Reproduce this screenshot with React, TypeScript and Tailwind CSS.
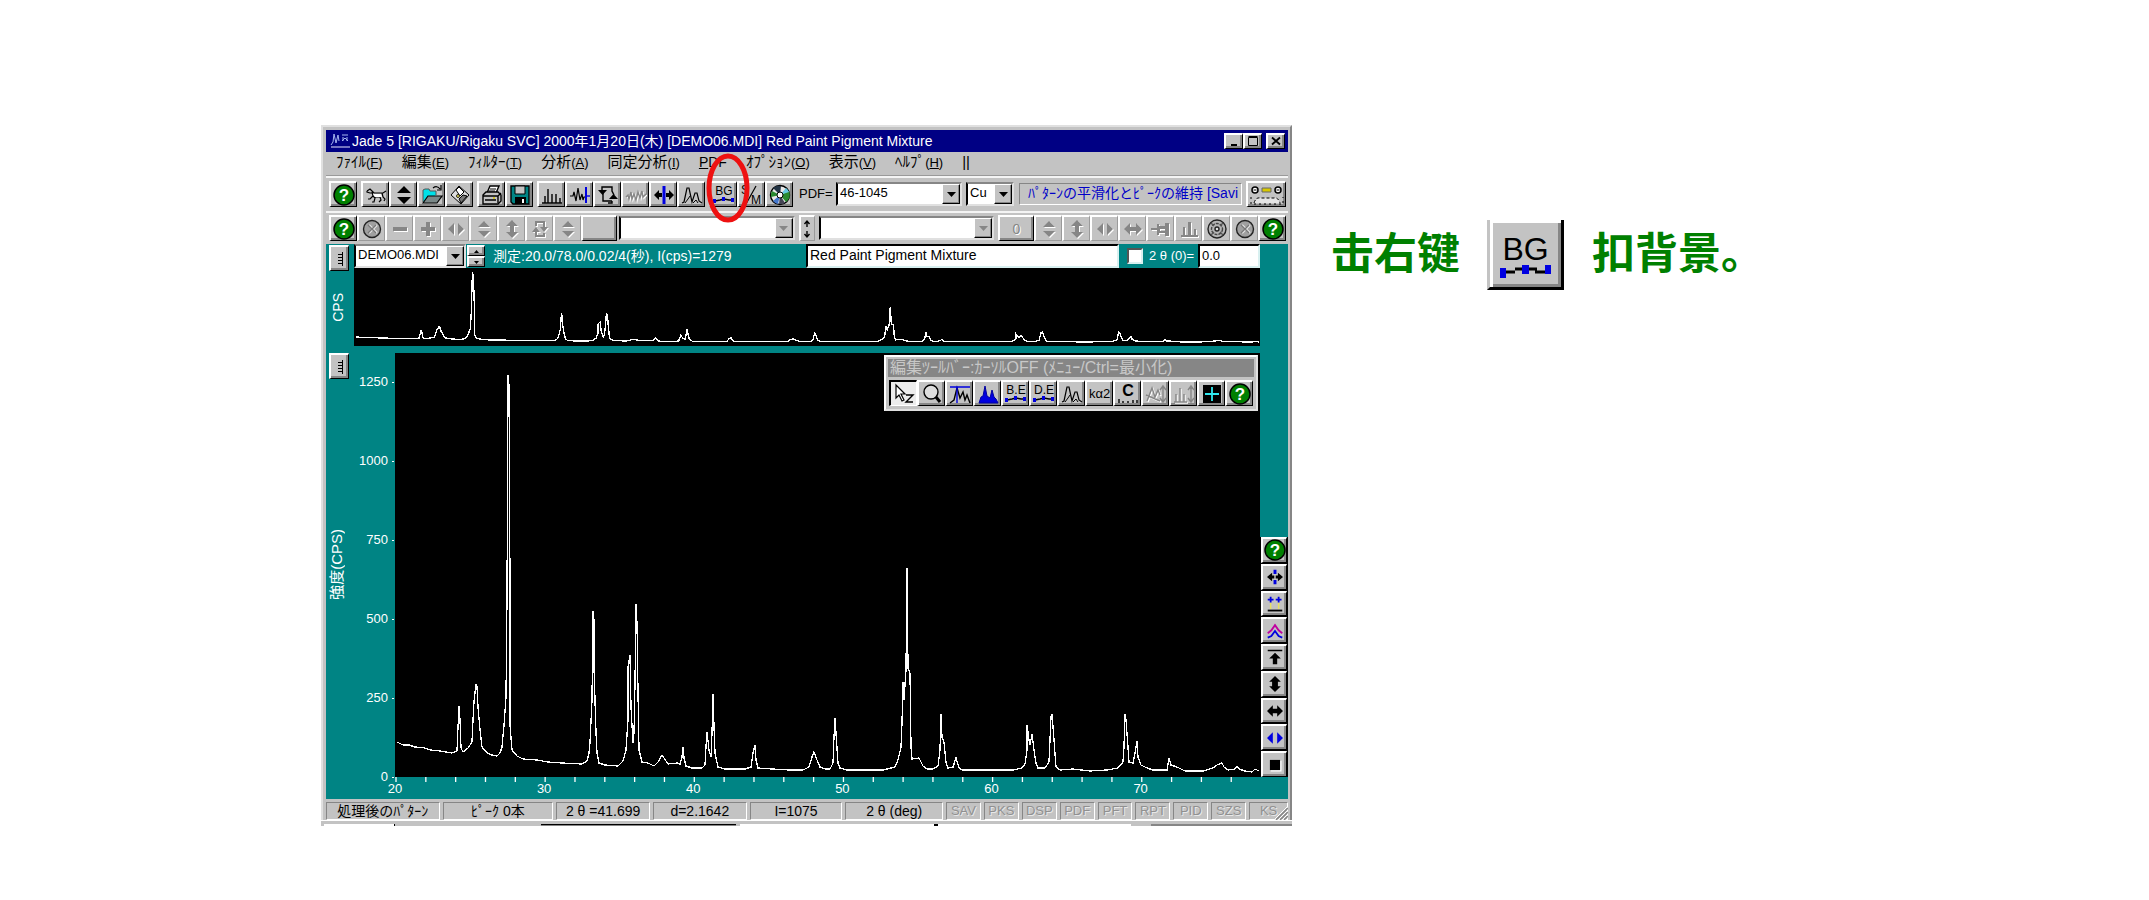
import type { ReactNode } from 'react'
import clsx from 'clsx'

// Diffraction trace in plot units (865 x 424, origin top left)
const TRACE: [number, number][] = [
  [2, 389], [8, 392], [14, 392], [20, 394], [30, 395], [35, 397], [45, 398], [57, 400], [62, 398], [63, 374], [64, 353], [65, 367], [66, 395],
  [68, 399], [73, 395], [77, 389], [78, 367], [79, 349], [81, 331], [82, 334], [83, 354], [85, 377], [87, 394], [92, 400], [97, 402],
  [102, 403], [105, 400], [107, 394], [109, 372], [111, 344], [112, 244], [113, 22], [114, 32], [115, 232], [115, 372], [117, 397],
  [122, 403], [128, 406], [142, 407], [153, 409], [167, 410], [187, 411], [192, 408], [194, 400], [195, 389], [197, 347], [198, 258],
  [199, 267], [199, 314], [201, 380], [202, 400], [204, 410], [210, 412], [223, 413], [228, 408], [231, 397], [233, 367], [233, 314],
  [235, 302], [236, 354], [238, 390], [239, 380], [240, 330], [241, 251], [242, 270], [243, 339], [244, 397], [247, 409], [253, 410],
  [259, 413], [263, 409], [267, 402], [271, 408], [273, 411], [282, 410], [285, 411], [287, 404], [288, 394], [289, 405], [291, 413],
  [297, 415], [307, 415], [310, 412], [311, 394], [312, 379], [314, 397], [316, 404], [317, 380], [318, 341], [319, 374], [320, 400],
  [323, 414], [330, 416], [350, 416], [356, 414], [358, 400], [360, 392], [361, 407], [363, 415], [377, 416], [395, 417], [408, 417],
  [414, 414], [417, 404], [419, 399], [422, 407], [425, 414], [430, 416], [435, 416], [438, 410], [439, 384], [440, 365], [441, 380],
  [443, 410], [445, 415], [452, 417], [488, 417], [500, 414], [503, 407], [506, 394], [507, 370], [508, 329], [509, 347], [511, 317],
  [512, 215], [513, 315], [515, 320], [516, 394], [517, 406], [524, 405], [528, 413], [532, 416], [538, 416], [543, 413], [545, 397],
  [546, 361], [547, 384], [549, 389], [551, 410], [553, 415], [558, 414], [561, 405], [564, 415], [567, 417], [618, 417], [627, 415],
  [630, 411], [632, 397], [632, 372], [634, 387], [635, 392], [637, 381], [639, 397], [641, 410], [643, 415], [650, 415], [654, 409],
  [655, 387], [656, 364], [657, 361], [659, 387], [661, 414], [665, 417], [678, 416], [695, 418], [712, 417], [723, 415], [728, 409],
  [729, 394], [730, 361], [731, 367], [733, 394], [734, 409], [738, 410], [740, 400], [742, 388], [743, 404], [746, 412], [752, 415],
  [758, 417], [772, 417], [774, 405], [776, 412], [782, 414], [790, 418], [808, 418], [818, 415], [822, 412], [827, 410], [829, 414],
  [833, 417], [840, 416], [842, 413], [844, 416], [850, 418], [857, 419], [860, 416], [864, 418],
]

const mainPoints = TRACE.map(([x, y]) => `${x},${y}`).join(' ')
const overviewPoints = TRACE.map(([x, y]) => `${x},${75 - (424 - y) * 0.173}`).join(' ')

const MENUS = [
  ['ﾌｧｲﾙ', 'F'],
  ['編集', 'E'],
  ['ﾌｨﾙﾀｰ', 'T'],
  ['分析', 'A'],
  ['同定分析', 'I'],
  ['PDF', ''],
  ['ｵﾌﾟｼｮﾝ', 'O'],
  ['表示', 'V'],
  ['ﾍﾙﾌﾟ', 'H'],
]

const FLAGS = ['SAV', 'PKS', 'DSP', 'PDF', 'PFT', 'RPT', 'PID', 'SZS']

function Icon({ children, className = 'w-[22px] h-[22px]' }: { children: ReactNode; className?: string }) {
  return (
    <svg viewBox="0 0 22 22" className={clsx('shrink-0', className)} fill="none" stroke="#000" strokeWidth="1.4" aria-hidden="true">
      {children}
    </svg>
  )
}

// Grey glyph with the white lower-right echo of a disabled button
function Etched({ d }: { d: string }) {
  return (
    <Icon>
      <g stroke="none">
        <path d={d} fill="#fff" transform="translate(1 1)" />
        <path d={d} fill="#868686" />
      </g>
    </Icon>
  )
}

const HelpIcon = () => (
  <Icon>
    <circle cx="11" cy="11" r="10" fill="#008000" strokeWidth="1.5" />
    <text x="11" y="17" textAnchor="middle" fill="#fff" stroke="none" className="font-bold text-[17px]">?</text>
  </Icon>
)

const BaselineIcon = ({ label }: { label: string }) => (
  <Icon>
    <text x="11" y="11" textAnchor="middle" fill="#000" stroke="none" className="text-[12px]">{label}</text>
    <path d="M2 17 l5 -1 l4 -1 l5 1 l4 0" />
    <path d="M0 15h3v4h-3z M9 13h3v4h-3z M18 14h3v4h-3z" fill="#0000e0" stroke="none" />
  </Icon>
)

const PeaksIcon = () => (
  <Icon>
    <path d="M1 19 L3 18 L6 4 L8 4 L11 18 L14 9 L16 9 L18 17 L21 19" strokeWidth="1.200" />
    <path d="M4 19 L7 15 L9 12 M12 19 L15 16 L17 19" strokeWidth="1" />
  </Icon>
)

const CrossIcon = () => (
  <Icon>
    <circle cx="11" cy="11" r="8.5" fill="#a0a0a0" stroke="#222" />
    <path d="M8 7 l8 8 M16 7 l-8 8" stroke="#e8e8e8" strokeWidth="2" />
    <path d="M7 7 l8 8 M15 7 l-8 8" stroke="#777" strokeWidth="1.400" />
  </Icon>
)

const SPLIT_H = 'M9 5 v12 l-6 -6z M13 5 v12 l6 -6z'
const SPLIT_V = 'M5 9 h12 l-6 -6z M5 13 h12 l-6 6z'
const ARROW_H = 'M2 11 l6 -6 v4 h6 v-4 l6 6 l-6 6 v-4 h-6 v4z'
const ARROW_V = 'M11 2 l6 6 h-4 v6 h4 l-6 6 l-6 -6 h4 v-6 h-4z'
const CYCLE = 'M6 3h10v6h3l-4 5l-4 -5h3v-4h-6v3h-2z M16 19h-10v-5h-3l4 -5l4 5h-3v3h6v-2h2z'

function ToolButton({ label, children, flat, wide = 'w-7', tall = 'h-[26px]', className }: { label: string; children?: ReactNode; flat?: boolean; wide?: string; tall?: string; className?: string }) {
  return (
    <button
      type="button"
      aria-label={label}
      disabled={flat}
      className={clsx(
        'shrink-0 flex items-center justify-center overflow-hidden bg-[#c3c3c3] text-black border-t-2 border-l-2 border-t-white border-l-white border-r border-b',
        flat ? 'border-r-[#9a9a9a] border-b-[#9a9a9a]' : 'border-r-black border-b-black shadow-[inset_-2px_-2px_0_#868686]',
        wide,
        tall,
        className,
      )}
    >
      {children}
    </button>
  )
}

function Combo({ label, value, disabled, className }: { label: string; value: string; disabled?: boolean; className: string }) {
  return (
    <div className={clsx('relative shrink-0 h-6 bg-white border-2 border-t-[#868686] border-l-black border-r-[#e0e0e0] border-b-[#e0e0e0]', className)}>
      <select aria-label={label} disabled={disabled} className="block appearance-none w-full h-[18px] pl-0.5 py-0 text-[13px] leading-[18px] bg-white text-black opacity-100 outline-none">
        <option>{value}</option>
      </select>
      <span className="absolute right-0 top-0 bottom-0 w-[18px] flex items-center justify-center pointer-events-none bg-[#c3c3c3] border border-t-white border-l-white border-r-black border-b-black shadow-[inset_-1px_-1px_0_#868686]">
        <svg viewBox="0 0 9 5" className="w-[9px] h-[5px]" aria-hidden="true">
          <path d="M0 0h9l-4.500 5z" fill={disabled ? '#868686' : '#000'} />
        </svg>
      </span>
    </div>
  )
}

function AxisButton({ label }: { label: string }) {
  return (
    <ToolButton label={label} wide="w-5">
      <svg viewBox="0 0 10 16" className="w-[10px] h-4" stroke="#000" aria-hidden="true">
        <path d="M7.500 1v14 M3 3.500h4 M3 6.500h4 M3 9.500h4 M3 12.500h4" fill="none" />
      </svg>
    </ToolButton>
  )
}

function MainToolbar() {
  return (
    <div className="flex items-center h-[35px] pl-[3px] pr-0.5 pb-px border-t-2 border-t-[#f4f4f4]">
      <ToolButton label="Help"><HelpIcon /></ToolButton>
      <div className="flex ml-1">
        <ToolButton label="Pattern">
          <Icon>
            <path d="M2 7 L5 5 L7 7 L9 9 H16 L18 9 L21 7 M2 7 v1 l3 1 l2 0 M7 8 L8 12 L5 15 H3 M8 12 L10 14 L9 18 H7 M10 13 H15 M17 9 L18 13 L20 15 L19 17 M15 13 L16 16 L14 18" strokeWidth="1.200" />
            <path d="M8 10 h8 l1 3 h-7z" fill="#fff" stroke="none" />
          </Icon>
        </ToolButton>
        <ToolButton label="Browse"><Icon><path d="M4 9 h14 l-7 -7z M4 13 h14 l-7 7z" fill="#000" stroke="none" /></Icon></ToolButton>
        <ToolButton label="Open">
          <Icon>
            <path d="M2 18 V6 l2 -1 h4 l1 2 h6 v4" fill="#00e0e8" stroke="#555" strokeWidth="1" />
            <path d="M2 19 l5 -7 h14 l-5 7z" fill="#7a8888" strokeWidth="1.200" />
            <path d="M12 4 q4 -3 7 1 M20 1 v5 h-4" strokeWidth="1.200" />
          </Icon>
        </ToolButton>
        <ToolButton label="Recent">
          <Icon>
            <path d="M2 11 L10 2 L20 11 L12 20z" fill="#ddd" strokeWidth="1" />
            <path d="M7 6 l3 -3 l5 5 l-4 4z" fill="#fff" strokeWidth="1" />
            <path d="M10 15 l4 -4 l4 1 l-6 7z" fill="#777" strokeWidth="1" />
            <circle cx="9" cy="12" r="1.500" fill="#e8e060" strokeWidth=".800" />
          </Icon>
        </ToolButton>
      </div>
      <div className="flex ml-1">
        <ToolButton label="Print">
          <Icon>
            <path d="M6 9 l3 -7 h9 l-3 7z" fill="#fff" />
            <path d="M9 5h6 M8 7h6" strokeWidth="1" />
            <path d="M2 11 l3 -3 h12 l3 3 v6 l-3 3 h-15z" fill="#c3c3c3" />
            <path d="M2 12h15v7 M17 12 l3 -3 M4 16 h11" />
            <path d="M12 14h2" stroke="#d8c800" />
          </Icon>
        </ToolButton>
        <ToolButton label="Save">
          <Icon>
            <path d="M2 2h18v18h-16l-2 -2z" fill="#008484" />
            <path d="M6 2h10v8h-10z" fill="#c3c3c3" strokeWidth="1" />
            <path d="M6 13h11v7h-11z" fill="#000" stroke="none" />
            <path d="M13 15h2v4h-2z" fill="#fff" stroke="none" />
          </Icon>
        </ToolButton>
      </div>
      <div className="flex ml-1">
        <ToolButton label="Lines"><Icon><path d="M1 19h20 M4 19v-7 M7 19v-14 M11 19v-9 M15 19v-9 M19 19v-5" /></Icon></ToolButton>
        <ToolButton label="Smooth">
          <Icon>
            <path d="M1 12 h3 l1 -4 l2 9 l2 -13 l2 12 l2 -6 l1 6 l1 -3 h2" strokeWidth="1.200" />
            <path d="M17 3v16" stroke="#0000e0" strokeWidth="2" />
            <path d="M16 12h5" stroke="#0000e0" />
          </Icon>
        </ToolButton>
        <ToolButton label="Reload">
          <Icon>
            <path d="M5 7 v-4 h10 v4 l2 4 M6 9 v8 h9 M15 17 v2 h-4" />
            <path d="M1 6h9l-4.500 5z M12 15h9l-4.500 -5z" fill="#000" stroke="none" />
          </Icon>
        </ToolButton>
        <ToolButton label="Noise">
          <Icon>
            <path d="M1 13 l2 -2 l1 4 l2 -7 l1 7 l2 -5 l2 6 l2 -8 l2 6 l2 -7 l1 6 l3 -3" stroke="#fff" transform="translate(1 1)" />
            <path d="M1 13 l2 -2 l1 4 l2 -7 l1 7 l2 -5 l2 6 l2 -8 l2 6 l2 -7 l1 6 l3 -3" stroke="#868686" />
          </Icon>
        </ToolButton>
        <ToolButton label="Center">
          <Icon>
            <path d="M9.500 2h3v18h-3z" fill="#0000e0" stroke="none" />
            <path d="M1 11l5 -5v3h3v4h-3v3z M21 11l-5 -5v3h-3v4h3v3z" fill="#000" stroke="none" />
          </Icon>
        </ToolButton>
        <ToolButton label="Peaks"><PeaksIcon /></ToolButton>
      </div>
      <div className="flex ml-1">
        <div className="relative">
          <ToolButton label="Background"><BaselineIcon label="BG" /></ToolButton>
          <svg viewBox="0 0 46 72" className="absolute z-10 -left-1 -top-7 w-[46px] h-[72px] pointer-events-none" aria-hidden="true">
            <ellipse cx="23" cy="35" rx="19" ry="32" fill="none" stroke="#ee1111" strokeWidth="5" />
          </svg>
        </div>
        <ToolButton label="Search match">
          <Icon>
            <text x="0" y="10" fill="#000" stroke="none" className="text-[12px]">S</text>
            <text x="10" y="20" fill="#000" stroke="none" className="text-[12px]">M</text>
            <path d="M5 20 L15 2" strokeWidth="1.200" />
          </Icon>
        </ToolButton>
        <ToolButton label="Disc">
          <Icon>
            <circle cx="11" cy="11" r="9.500" fill="#e8e8e8" />
            <path d="M11 11 L4 4 A9.500 9.500 0 0 1 12 2z" fill="#234" stroke="none" />
            <path d="M11 11 L20 7 A9.500 9.500 0 0 1 17 18z" fill="#2a8a30" stroke="none" />
            <path d="M11 11 L3 7 A9 9 0 0 0 2 13z" fill="#2a8a30" stroke="none" />
            <path d="M11 11 L17 4 A9 9 0 0 1 20 8z" fill="#66c8e0" stroke="none" />
            <path d="M11 11 L4 17 A9 9 0 0 0 9 20z" fill="#4477cc" stroke="none" />
            <path d="M11 11 L10 20 A9 9 0 0 0 16 19z" fill="#445" stroke="none" />
            <circle cx="11" cy="11" r="3" fill="#fff" strokeWidth="1" />
          </Icon>
        </ToolButton>
      </div>
      <span className="ml-1.5 mr-px w-9 text-[13px] leading-5">PDF=</span>
      <Combo label="PDF card" value="46-1045" className="w-[126px]" />
      <Combo label="Anode" value="Cu" className="w-12 ml-1" />
      <output className="flex-1 min-w-0 h-[22px] ml-[5px] mr-1 pl-2 overflow-hidden whitespace-nowrap text-sm leading-[18px] text-[#0000c8] border border-t-[#868686] border-l-[#868686] border-r-white border-b-white">
        ﾊﾟﾀｰﾝの平滑化とﾋﾟｰｸの維持 [Savi
      </output>
      <ToolButton label="Recorder" wide="w-10">
        <svg viewBox="0 0 34 20" className="w-[34px] h-5" fill="none" stroke="#000" aria-hidden="true">
          <circle cx="5" cy="5" r="3" fill="#fff" strokeWidth="1.500" />
          <circle cx="28" cy="5" r="3" fill="#fff" strokeWidth="1.500" />
          <path d="M3.500 5h3 M26.500 5h3" />
          <path d="M12 3h9v4h-9z" fill="#d8c800" stroke="#666" />
          <path d="M4 18 q2 -6 6 -5 h14 q4 -1 6 5" fill="#e4e4e4" strokeDasharray="3 2" />
          <path d="M1 12v7h32v-7" strokeDasharray="2 3" />
        </svg>
      </ToolButton>
    </div>
  )
}

function EditToolbar() {
  return (
    <div className="flex items-center h-[33px] pl-[3px] pr-0.5 pb-px border-t-2 border-t-[#f4f4f4]">
      <ToolButton label="Help"><HelpIcon /></ToolButton>
      <ToolButton flat label="Cancel"><CrossIcon /></ToolButton>
      <ToolButton flat label="Less"><Etched d="M4 9h14v4h-14z" /></ToolButton>
      <ToolButton flat label="More"><Etched d="M4 9h5v-5h4v5h5v4h-5v5h-4v-5h-5z" /></ToolButton>
      <ToolButton flat label="Spread"><Etched d={SPLIT_H} /></ToolButton>
      <ToolButton flat label="Step"><Etched d={SPLIT_V} /></ToolButton>
      <ToolButton flat label="Scale"><Etched d={ARROW_V} /></ToolButton>
      <ToolButton flat label="Cycle"><Etched d={CYCLE} /></ToolButton>
      <ToolButton flat label="Shift"><Etched d={SPLIT_V} /></ToolButton>
      <ToolButton label="Apply" wide="w-9" />
      <Combo disabled label="Phase" value="" className="flex-1 min-w-0 ml-0.5" />
      <ToolButton flat label="Swap" wide="w-4" className="mx-1">
        <svg viewBox="0 0 8 20" className="w-2 h-5" fill="none" stroke="#000" strokeWidth="1.400" aria-hidden="true">
          <path d="M4 2v6 M1.500 5 l2.500 -3 l2.500 3 M4 12v6 M1.500 15 l2.500 3 l2.500 -3" />
        </svg>
      </ToolButton>
      <Combo disabled label="Overlay" value="" className="flex-1 min-w-0 mr-1" />
      <ToolButton label="Count" wide="w-9">
        <span className="text-sm text-[#868686] [text-shadow:1px_1px_0_#fff]">0</span>
      </ToolButton>
      <ToolButton flat label="Step up"><Etched d={SPLIT_V} /></ToolButton>
      <ToolButton flat label="Scale up"><Etched d={ARROW_V} /></ToolButton>
      <ToolButton flat label="Step across"><Etched d={SPLIT_H} /></ToolButton>
      <ToolButton flat label="Scale across"><Etched d={ARROW_H} /></ToolButton>
      <ToolButton flat label="Pin"><Etched d="M1 10h6v-4h2v2h6v-3h4v13h-4v-3h-6v2h-2v-5h-6z M10 11v2h5v-2z" /></ToolButton>
      <ToolButton flat label="Bars"><Etched d="M3 17h2v-8h2v8h3v-13h3v13h3v-6h2v6h2v2h-17z" /></ToolButton>
      <ToolButton flat label="Target">
        <Icon>
          <circle cx="11" cy="11" r="9" fill="#b5b5b5" stroke="#222" />
          <circle cx="11" cy="11" r="5.500" stroke="#444" strokeDasharray="3 1" />
          <path d="M5 5l3 3 M17 5l-3 3 M5 17l3 -3 M17 17l-3 -3" stroke="#555" />
          <circle cx="11" cy="11" r="2" fill="#ddd" stroke="#222" />
        </Icon>
      </ToolButton>
      <ToolButton flat label="Close"><CrossIcon /></ToolButton>
      <ToolButton label="Help"><HelpIcon /></ToolButton>
    </div>
  )
}

function FloatingToolbar() {
  return (
    <section className="absolute right-0.5 top-0.5 w-[374px] p-0.5 bg-[#c3c3c3] border-2 border-t-white border-l-white border-r-[#e0e0e0] border-b-[#e0e0e0]">
      <h2 className="h-[18px] px-0.5 overflow-hidden whitespace-nowrap bg-[#868686] text-[#c8c8c8] text-base leading-[17px]">
        編集ﾂｰﾙﾊﾞｰ:ｶｰｿﾙOFF (ﾒﾆｭｰ/Ctrl=最小化)
      </h2>
      <div className="flex mt-[3px] ml-px pb-px">
        <button type="button" aria-label="Cursor" aria-pressed="true" className="w-7 h-[26px] flex items-center justify-center bg-[#ececec] text-black border-t-2 border-l-2 border-t-black border-l-black border-r border-b border-r-white border-b-white">
          <Icon>
            <path d="M3 2 v13 l3 -3 l3 6 l2 -1 l-3 -6 h4z" fill="#fff" strokeWidth="1.200" />
            <path d="M13 12h7l-7 7h7" />
          </Icon>
        </button>
        <ToolButton label="Zoom">
          <Icon><circle cx="10" cy="9" r="7" fill="#ddd" /><path d="M15 14 l4 5" strokeWidth="3" /></Icon>
        </ToolButton>
        <ToolButton label="Peak search">
          <Icon>
            <path d="M1 20 L5 17 L8 5 L11 15 L14 9 L16 17 L18 12 L21 20" />
            <path d="M1 4h20 M8 4v16" stroke="#0000e0" />
          </Icon>
        </ToolButton>
        <ToolButton label="Area">
          <Icon><path d="M2 20 L4 14 L6 13 L8 3 L10 13 L13 15 L15 7 L17 14 L19 16 L21 20z" fill="#0000e0" stroke="#0000a0" strokeWidth="1" /></Icon>
        </ToolButton>
        <ToolButton label="Background edit"><BaselineIcon label="B.E" /></ToolButton>
        <ToolButton label="Data edit"><BaselineIcon label="D.E" /></ToolButton>
        <ToolButton label="Profile"><PeaksIcon /></ToolButton>
        <ToolButton label="K alpha 2"><span className="text-[13px] leading-5">kα2</span></ToolButton>
        <ToolButton label="Calibrate">
          <Icon>
            <text x="11" y="13" textAnchor="middle" fill="#000" stroke="none" className="font-bold text-[16px]">C</text>
            <path d="M2 16v4 M6 18v2 M11 18v2 M16 17v3 M20 17v3" />
          </Icon>
        </ToolButton>
        <ToolButton label="Peak height">
          <Icon>
            <path d="M2 18 L7 5 L10 14 L13 7 L15 12 M1 12 L15 18" stroke="#fff" transform="translate(1 1)" />
            <path d="M2 18 L7 5 L10 14 L13 7 L15 12 M1 12 L15 18 M18 3v16 M15 7l3 -4l3 4 M15 15l3 4l3 -4" stroke="#868686" />
          </Icon>
        </ToolButton>
        <ToolButton label="Line height">
          <Icon>
            <path d="M1 19h13 M3 19v-8 M7 19v-14 M11 19v-8" stroke="#fff" transform="translate(1 1)" />
            <path d="M1 19h13 M3 19v-8 M7 19v-14 M11 19v-8 M18 3v16 M15 7l3 -4l3 4 M15 15l3 4l3 -4" stroke="#868686" />
          </Icon>
        </ToolButton>
        <ToolButton label="Crosshair">
          <Icon>
            <path d="M2 2h18v18h-18z" fill="#000" stroke="none" />
            <path d="M11 4v14 M4 11h14" stroke="#30e8f0" strokeWidth="1.800" />
          </Icon>
        </ToolButton>
        <ToolButton label="Help"><HelpIcon /></ToolButton>
      </div>
    </section>
  )
}

function SideTools() {
  return (
    <div className="grid grid-rows-9 h-60 mt-[184px] px-px bg-black gap-px">
      <ToolButton label="Help" wide="w-full" tall="h-full"><HelpIcon /></ToolButton>
      <ToolButton label="Move" wide="w-full" tall="h-full">
        <Icon className="w-4 h-4">
          <path d="M9 1h4v6h-4z M9 15h4v6h-4z" fill="#0000e0" stroke="none" />
          <path d="M0 11l7 -6v4h3v4h-3v4z M22 11l-7 -6v4h-3v4h3v4z" fill="#000" stroke="none" />
        </Icon>
      </ToolButton>
      <ToolButton label="Raise" wide="w-full" tall="h-full">
        <Icon className="w-4 h-4">
          <path d="M5 9v9 M16 9v9" stroke="#e8e060" strokeWidth="2" />
          <path d="M5 1v8 M16 1v8 M1 5h8 M12 5h8" stroke="#0000e0" strokeWidth="2.500" />
          <path d="M1 20h20" strokeWidth="2.500" />
        </Icon>
      </ToolButton>
      <ToolButton label="Offset" wide="w-full" tall="h-full">
        <Icon className="w-4 h-4">
          <path d="M1 14 l5 -4 l5 -7 l5 7 l5 4" stroke="#c000a0" strokeWidth="2.500" />
          <path d="M1 20 l5 -2 l5 -7 l5 7 l5 2" stroke="#0000e0" strokeWidth="2.500" />
        </Icon>
      </ToolButton>
      <ToolButton label="Top" wide="w-full" tall="h-full">
        <Icon className="w-4 h-4"><path d="M1 1h20v2h-20z M11 5l8 8h-5v8h-6v-8h-5z" fill="#000" stroke="none" /></Icon>
      </ToolButton>
      <ToolButton label="Stretch up" wide="w-full" tall="h-full">
        <Icon className="w-4 h-4"><path d="M11 0l8 8h-4v6h4l-8 8l-8 -8h4v-6h-4z" fill="#000" stroke="none" /></Icon>
      </ToolButton>
      <ToolButton label="Stretch across" wide="w-full" tall="h-full">
        <Icon className="w-4 h-4"><path d="M0 11l8 -8v5h6v-5l8 8l-8 8v-5h-6v5z" fill="#000" stroke="none" /></Icon>
      </ToolButton>
      <ToolButton label="Scroll" wide="w-full" tall="h-full">
        <Icon className="w-4 h-4"><path d="M0 11l8 -8v16z M22 11l-8 -8v16z" fill="#0000e0" stroke="none" /></Icon>
      </ToolButton>
      <ToolButton label="Stop" wide="w-full" tall="h-full">
        <Icon className="w-4 h-4">
          <path d="M5 5h15v15h-15z" fill="#fff" stroke="none" />
          <path d="M4 4h14v14h-14z" fill="#000" stroke="none" />
        </Icon>
      </ToolButton>
    </div>
  )
}

function OverviewPanel() {
  return (
    <div className="flex">
      <div className="w-7 shrink-0 pt-px pl-[3px]">
        <AxisButton label="Overview axis" />
        <div className="mt-[22px] ml-px text-sm leading-4 [writing-mode:vertical-rl] rotate-180">CPS</div>
      </div>
      <div className="flex-1 min-w-0">
        <div className="flex items-center h-6">
          <Combo label="File" value="DEMO06.MDI" className="w-[112px]" />
          <div className="flex flex-col w-[18px] ml-px mr-2">
            {['up', 'down'].map((dir) => (
              <ToolButton key={dir} label={dir} wide="w-full" tall="h-[11px]">
                <svg viewBox="0 0 5 3" className="w-[5px] h-[3px]" aria-hidden="true">
                  <path d={dir === 'up' ? 'M0 3h5l-2.500 -3z' : 'M0 0h5l-2.500 3z'} />
                </svg>
              </ToolButton>
            ))}
          </div>
          <span className="flex-1 min-w-0 overflow-hidden whitespace-nowrap text-sm leading-6">
            測定:20.0/78.0/0.02/4(秒), I(cps)=1279
          </span>
          <input aria-label="Title" defaultValue="Red Paint Pigment Mixture" className="w-[313px] h-6 px-0.5 pb-0.5 bg-white text-black text-sm outline-none border-2 border-t-black border-l-black border-r-[#d8f0f0] border-b-[#d8f0f0]" />
          <label className="flex items-center ml-2 text-[13px] leading-5 whitespace-nowrap">
            <input type="checkbox" className="appearance-none w-4 h-4 mr-1.5 bg-white border-2 border-t-[#555] border-l-[#555] border-r-[#d8f0f0] border-b-[#d8f0f0]" />
            <span className="w-[49px]">2 θ (0)=</span>
          </label>
          <input aria-label="Two theta offset" defaultValue="0.0" className="w-[62px] h-6 px-0.5 pb-0.5 bg-white text-black text-[13px] outline-none border-2 border-t-black border-l-black border-r-[#d8f0f0] border-b-[#d8f0f0]" />
        </div>
        <svg viewBox="0 0 865 78" preserveAspectRatio="none" className="block w-full h-[78px] bg-black" aria-label="Overview pattern">
          <polyline points={overviewPoints} fill="none" stroke="#fff" strokeWidth="1.300" shapeRendering="crispEdges" />
        </svg>
      </div>
      <div className="w-7 shrink-0" />
    </div>
  )
}

function PlotPanel() {
  const ticks = Array.from({ length: 30 }, (_, i) => i * 29.83 + 1)
  return (
    <div className="flex mt-[7px]">
      <div className="w-7 shrink-0 pl-[3px]">
        <AxisButton label="Intensity axis" />
        <div className="mt-[150px] text-[15px] leading-4 [writing-mode:vertical-rl] [text-orientation:sideways] rotate-180">強度(CPS)</div>
      </div>
      <div className="w-[41px] shrink-0 h-[424px] pt-[21px] pr-px text-[13px] leading-4">
        {[1250, 1000, 750, 500, 250, 0].map((v) => (
          <div key={v} className="flex items-center justify-end h-4 mb-[63px] gap-1">
            {v}
            <span className="w-0.5 h-px bg-white" />
          </div>
        ))}
      </div>
      <div className="flex-1 min-w-0 relative">
        <svg viewBox="0 0 865 424" preserveAspectRatio="none" className="block w-full h-[424px] bg-black" aria-label="Diffraction pattern">
          <polyline points={mainPoints} fill="none" stroke="#fff" strokeWidth="1.300" shapeRendering="crispEdges" />
        </svg>
        <svg viewBox="0 0 865 5" preserveAspectRatio="none" className="block w-full h-[5px]" aria-hidden="true">
          <path d={ticks.map((x) => `M${x} 0v5`).join(' ')} stroke="#fff" strokeWidth="1.300" />
        </svg>
        <div className="flex h-[17px] text-[13px] leading-[14px]">
          {[20, 30, 40, 50, 60, 70].map((v) => (
            <div key={v} className={v === 70 ? 'flex-1 min-w-0' : 'shrink-0 basis-[17.240%]'}>
              <span className="inline-block -translate-x-1/2">{v}</span>
            </div>
          ))}
        </div>
        <FloatingToolbar />
      </div>
      <div className="w-7 shrink-0">
        <SideTools />
      </div>
    </div>
  )
}

function StatusCell({ children, dim }: { children: ReactNode; dim?: boolean }) {
  return (
    <div
      className={clsx(
        'min-w-0 h-[18px] overflow-hidden whitespace-nowrap text-center border-t border-l border-[#868686] border-r border-b border-r-white border-b-white leading-4',
        dim ? 'text-[13px] text-[#909090] [text-shadow:1px_1px_0_#e8e8e8]' : 'text-sm leading-4',
      )}
    >
      {children}
    </div>
  )
}

function StatusBar() {
  return (
    <footer className="grid grid-cols-[114fr_111fr_94fr_94fr_93fr_98fr_35fr_35fr_35fr_35fr_35fr_35fr_35fr_35fr_39fr] gap-x-[3px] pt-[3px] h-[21px] bg-[#c3c3c3]">
      <StatusCell>処理後のﾊﾟﾀｰﾝ</StatusCell>
      <StatusCell>ﾋﾟｰｸ 0本</StatusCell>
      <StatusCell>2 θ =41.699</StatusCell>
      <StatusCell>d=2.1642</StatusCell>
      <StatusCell>I=1075</StatusCell>
      <StatusCell>2 θ (deg)</StatusCell>
      {FLAGS.map((f) => (
        <StatusCell key={f} dim>{f}</StatusCell>
      ))}
      <div className="relative">
        <StatusCell dim>KS</StatusCell>
        <svg viewBox="0 0 14 14" className="absolute right-0 bottom-0 w-[14px] h-[14px]" aria-hidden="true">
          <path d="M2 14 L14 2 M6 14 L14 6 M10 14 L14 10" stroke="#868686" strokeWidth="1.500" />
          <path d="M0 14 L14 0 M4 14 L14 4 M8 14 L14 8" stroke="#fff" />
        </svg>
      </div>
    </footer>
  )
}

function JadeWindow() {
  return (
    <main className="min-w-0 bg-[#c3c3c3] text-black border-2 border-b-0 border-t-[#e0e0e0] border-l-[#e0e0e0] border-r-[#868686] pt-[3px] pl-[3px] pr-0.5">
      <header className="flex items-center h-[22px] pl-1 pr-[3px] bg-[#000084] text-white">
        <svg viewBox="0 0 20 18" className="w-5 h-[18px] mr-0.5" fill="none" stroke="#a8b8f0" aria-hidden="true">
          <path d="M1 13 L3 10 L4 2 L6 11 L8 3 L9 9 M12 3h6 M13 5v4 M17 5v4 M12 9l3 -3l3 3" />
          <path d="M1 15h19" stroke="#e8e8ff" />
        </svg>
        <h1 className="flex-1 min-w-0 overflow-hidden whitespace-nowrap text-sm leading-[22px]">
          Jade 5 [RIGAKU/Rigaku SVC] 2000年1月20日(木) [DEMO06.MDI] Red Paint Pigment Mixture
        </h1>
        <ToolButton label="Minimize" wide="w-[19px]" tall="h-4">
          <svg viewBox="0 0 11 11" className="w-[11px] h-[11px]" aria-hidden="true"><path d="M2 8h6v2h-6z" /></svg>
        </ToolButton>
        <ToolButton label="Maximize" wide="w-[19px]" tall="h-4">
          <svg viewBox="0 0 11 11" className="w-[11px] h-[11px]" fill="none" stroke="#000" aria-hidden="true"><path d="M.500 1.500h9v8h-9z M.500 .500h9" /></svg>
        </ToolButton>
        <ToolButton label="Close" wide="w-[19px]" tall="h-4" className="ml-1">
          <svg viewBox="0 0 11 11" className="w-[11px] h-[11px]" stroke="#000" strokeWidth="1.800" aria-hidden="true"><path d="M1 1.500l8 7 M9 1.500l-8 7" /></svg>
        </ToolButton>
      </header>
      <nav className="flex items-center gap-[19px] h-6 pl-2.5 pb-[3px] whitespace-nowrap border-b border-b-[#9a9a9a]">
        {MENUS.map(([name, key]) => (
          <button key={name} type="button" className="text-[15px] leading-5">
            {key ? name : <span className="text-sm leading-5"><u>P</u>DF</span>}
            {key && <span className="text-[13px] leading-5">(<u>{key}</u>)</span>}
          </button>
        ))}
        <span className="text-[15px] leading-5">||</span>
      </nav>
      <MainToolbar />
      <EditToolbar />
      <div className="bg-[#008484] text-white">
        <OverviewPanel />
        <PlotPanel />
      </div>
      <StatusBar />
    </main>
  )
}

// Top edge of the window lying underneath
function WindowFringe() {
  return (
    <div className="bg-[#c3c3c3] border-t border-t-white pt-[3px] pl-[3px]">
      <div className="grid grid-cols-[70fr_1fr_145fr_194fr_4fr_193fr_4fr_193fr_20fr_140fr] h-0.5">
        <span className="bg-white" />
        <span className="bg-black" />
        <span />
        <span className="bg-[#868686] border-t border-black" />
        <span />
        <span className="bg-white" />
        <span className="bg-black" />
        <span className="bg-white" />
        <span />
        <span className="bg-[#868686]" />
      </div>
    </div>
  )
}

export default function App() {
  return (
    <div className="min-h-screen grid grid-cols-[321fr_971fr_857fr] items-start pt-[125px] bg-white font-['Liberation_Sans','Noto_Sans_CJK_JP',sans-serif]">
      <div />
      <div className="min-w-0">
        <JadeWindow />
        <WindowFringe />
      </div>
      <aside className="flex items-start pl-[39px] pt-[95px] text-[#008000] text-[43px] leading-[60px] font-bold whitespace-nowrap font-['Noto_Sans_CJK_SC',sans-serif]">
        <span>击右键</span>
        <button
          type="button"
          aria-label="BG"
          className="flex flex-col items-center w-[77px] h-[70px] ml-[27px] mr-[28px] pt-[15px] bg-[#c3c3c3] border-l-[3px] border-l-[#c3c3c3] border-b-[3px] border-r-[3px] border-r-black border-b-black shadow-[inset_3px_3px_0_#fff,inset_-3px_-3px_0_#868686] text-black font-normal font-['Liberation_Sans',sans-serif]"
        >
          <span className="text-[32px] leading-7">BG</span>
          <svg viewBox="0 0 52 14" className="w-[52px] h-[14px] mt-px" fill="none" aria-hidden="true">
            <path d="M6 8h9 M15 5h22 M35 8h11" stroke="#000" strokeWidth="3" />
            <path d="M0 4h6v10h-6z M22 1h7v9h-7z M45 1h6v9h-6z" fill="#0000e0" />
          </svg>
        </button>
        <span>扣背景。</span>
      </aside>
    </div>
  )
}
